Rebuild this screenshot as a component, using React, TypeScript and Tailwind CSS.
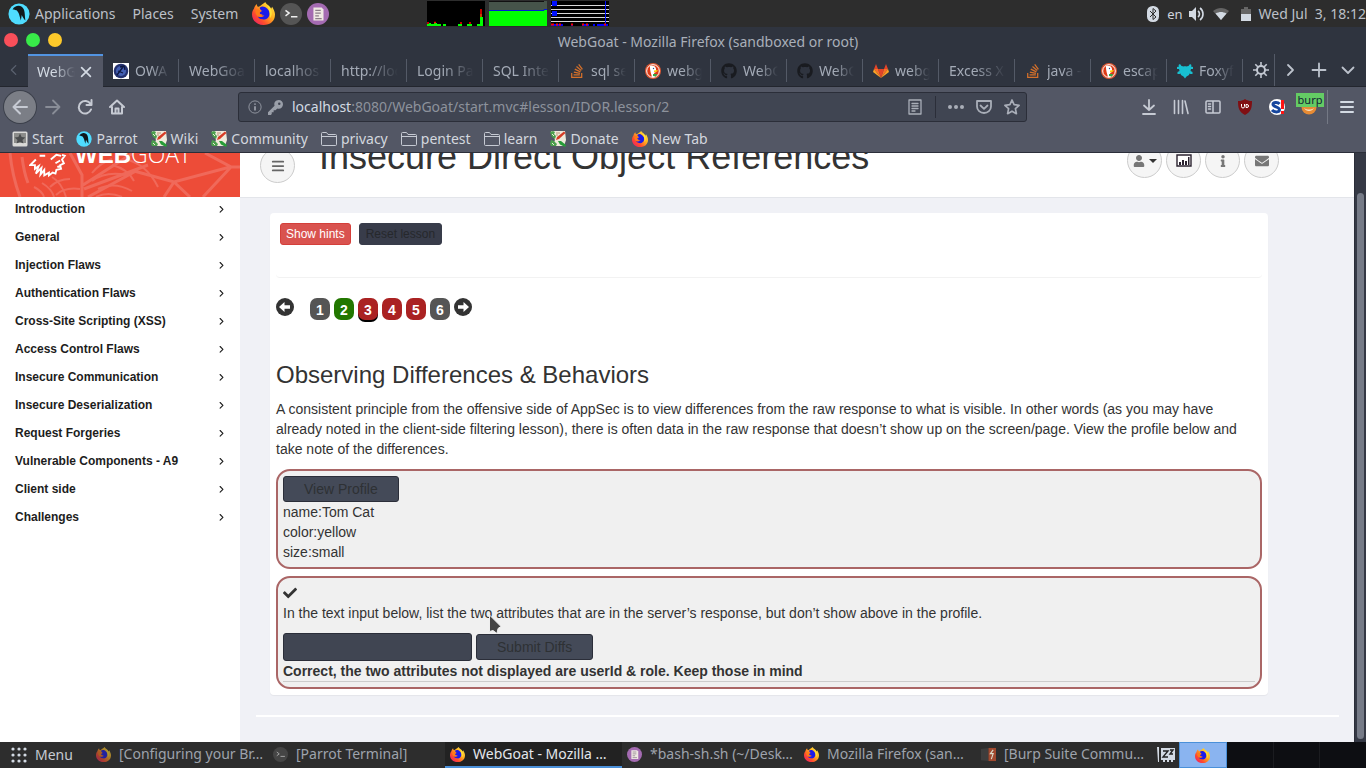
import React from "react";
import { FaGithub, FaStackOverflow, FaUser, FaInfo, FaEnvelope, FaCheck } from "react-icons/fa";

type IconProps = { className?: string };

const Firefox = ({ className = "size-4" }: IconProps) => (
  <svg viewBox="0 0 24 24" className={className} aria-hidden="true">
    <defs>
      <linearGradient id="ffx" x1="1" y1="0" x2="0" y2="1">
        <stop offset="0" stopColor="#fff44f" />
        <stop offset=".4" stopColor="#ffb01f" />
        <stop offset=".7" stopColor="#ff4a2e" />
        <stop offset="1" stopColor="#e5127d" />
      </linearGradient>
    </defs>
    <path d="M2 7C3 4 4 3 5 2c0 2 1 3 2 3 2-1 4-3 7-5 0 2 5 4 6 7l1-2c2 3 3 6 3 8 0 7-5 11-12 11S0 19 0 13c0-3 1-5 2-6z" fill="url(#ffx)" />
    <path d="M8 6c2-2 5-2 8 1 2 2 3 4 2 7-1 3-4 5-7 4-3 0-5-2-5-4 2 1 4 1 5-1-2 0-4-1-4-3 1 0 2 0 3-1-1-1-2-2-2-3z" fill="#1b1bea" />
    <path d="M4 8c2-1 4 0 5 1l2 0c-1 1-3 1-3 3 1 2 3 2 5 2-2 2-5 2-7 1-2-2-3-4-2-7z" fill="#ff7a18" />
    <path d="M16 3c5 4 6 9 3 14 0-5-1-9-3-14z" fill="#ffe339" />
  </svg>
);

const Parrot = ({ className = "size-4" }: IconProps) => (
  <svg viewBox="0 0 24 24" className={className} aria-hidden="true">
    <circle cx="12" cy="12" r="11.5" fill="#4fdcff" />
    <path d="M5 7c2-4 7-5 10-3 4 3 3 9 4 15-2-2-3-4-4-6l-1 6-2-7c-1-2-2-4-3-4-2-1-3-1-4-1z" fill="#10181c" />
  </svg>
);

const Terminal = ({ className = "size-[22px]" }: IconProps) => (
  <svg viewBox="0 0 24 24" className={className} aria-hidden="true">
    <circle cx="12" cy="12" r="12" fill="#555" />
    <path d="M6 8l4 3-4 3M12 15h7" fill="none" stroke="#eee" strokeWidth="1.6" />
  </svg>
);

const Editor = ({ className = "size-[22px]" }: IconProps) => (
  <svg viewBox="0 0 24 24" className={className} aria-hidden="true">
    <circle cx="12" cy="12" r="12" fill="#a46bb2" />
    <path d="M7 5h9l2 2v12H7z" fill="#efe9e4" />
    <path d="M9 8h6M9 11h6M9 14h4M9 17h7" stroke="#8b7d88" strokeWidth="1.2" />
  </svg>
);

const Wiki = () => (
  <svg viewBox="0 0 16 16" className="size-4" aria-hidden="true">
    <path d="M1 0h14l1 9-2 6H2l3-6z" fill="#efeadb" />
    <path d="M0 1l3-1 2 1-1 2 2 2-1 3-3-2zM1 9l3 1 3 3-1 2H1l-1-2z" fill="#4b9f4d" />
    <path d="M2 3l2 2M2 12l2 2" stroke="#efeadb" />
    <path d="M6 9l1-3 7-5.500 1.500 1.500L9 8z" fill="#d63c26" />
    <path d="M8 10l3 0 5 4-1 2-5-2.500z" fill="#279c38" />
    <path d="M6 2h4M6 4h2" stroke="#b98a6c" strokeWidth=".9" />
  </svg>
);

const Folder = () => (
  <svg viewBox="0 0 16 16" className="size-4" fill="none" stroke="#c6cad3" aria-hidden="true">
    <path d="M.5 13.500v-11c0-.6.4-1 1-1h4l1.500 2h7.500c.6 0 1 .4 1 1v9c0 .6-.4 1-1 1h-13c-.6 0-1-.4-1-1zM.5 5.500h15" />
  </svg>
);

const StartIcon = () => (
  <svg viewBox="0 0 16 16" className="size-4" aria-hidden="true">
    <rect x=".5" y=".5" width="15" height="15" rx="1.500" fill="#d9d9d7" />
    <rect x="2" y="2" width="12" height="10" fill="#8b8c8a" />
    <path d="M8 2.500l1.600 3.500 3.800.4-2.900 2.500.9 3.700L8 10.700l-3.400 1.900.9-3.700L2.600 6.400l3.800-.4z" fill="#4a4c4e" />
  </svg>
);

const Duck = () => (
  <svg viewBox="0 0 16 16" className="size-4 shrink-0" aria-hidden="true">
    <circle cx="8" cy="8" r="8" fill="#de5833" />
    <circle cx="8" cy="8" r="6.300" fill="#de3a16" stroke="#fff" />
    <path d="M5 3c3-1 6 0 6 3v3l-2 1 1 4-3 0C6 11 5 7 5 5z" fill="#fff" />
    <path d="M9 7.500c2 0 3-.5 4 0-.5 1-2 2-4 1.500z" fill="#fdd20a" />
    <path d="M8 11l4 0-1 2.500-3-.5z" fill="#35a844" />
    <circle cx="8.500" cy="5.500" r=".7" fill="#2d4f8e" />
  </svg>
);

const Owasp = () => (
  <svg viewBox="0 0 16 16" className="size-4 shrink-0" aria-hidden="true">
    <path d="M0 0h16v16H0z" fill="#fff" />
    <circle cx="8" cy="8" r="7.300" fill="#23316f" />
    <circle cx="8" cy="8" r="5" fill="#4460b4" />
    <path d="M4 12l6-8M7 4l4-1 1 4M5 8l5 2" stroke="#0d1740" strokeWidth="1.300" fill="none" />
  </svg>
);

const Foxy = () => (
  <svg viewBox="0 0 16 16" className="size-4 shrink-0" fill="#18bfd1" aria-hidden="true">
    <path d="M3 1l1.500 2L7 3.500 8 3l1 .5 2.500-.5L13 1l1.500 1-.5 1.500 2 .5v2l-2 0-.5 2 2 1v2h-2l-1-.5-.5 1.500-2.500 1.500L8 15.500 6.500 13.500 4 12l-.5-1.500-1 .5h-2V9l2-1L2 6H0V4l2-.5L1.500 2z" />
  </svg>
);

const Gitlab = () => (
  <svg viewBox="0 0 16 16" className="size-4 shrink-0" aria-hidden="true">
    <path d="M8 15L5 6h6z" fill="#e24329" />
    <path d="M8 15L5 6H1zM8 15l3-9h4z" fill="#fc6d26" />
    <path d="M8 15L1 6 0 9zM8 15l7-9 1 3z" fill="#fca326" />
    <path d="M1 6l2-5 2 5zM11 6l2-5 2 5z" fill="#e24329" />
  </svg>
);

const CircleArrow = ({ flip = false }: { flip?: boolean }) => (
  <svg viewBox="0 0 18 18" className={flip ? "size-[18px] -scale-x-100" : "size-[18px]"} aria-hidden="true">
    <circle cx="9" cy="9" r="9" fill="#333" />
    <path d="M3 9l5.500-5v3.300H14v3.400H8.500V14z" fill="#fff" />
  </svg>
);

const Gear = () => (
  <svg viewBox="0 0 16 16" className="size-4" fill="none" stroke="#c3c8d2" strokeWidth="2" aria-hidden="true">
    <circle cx="8" cy="8" r="4" />
    <path d="M8 0v4M8 12v4M0 8h4M12 8h4M2.300 2.300l2.700 2.700M11 11l2.700 2.700M2.300 13.700L5 11M11 5l2.700-2.700" strokeWidth="1.600" />
  </svg>
);

const Stroke = ({ d, className = "size-4", w = 2 }: { d: string; className?: string; w?: number }) => (
  <svg viewBox="0 0 16 16" className={className} fill="none" stroke="currentColor" strokeWidth={w} strokeLinecap="round" strokeLinejoin="round" aria-hidden="true">
    <path d={d} />
  </svg>
);

const stack = <FaStackOverflow className="size-4 shrink-0 text-[#d5702a]" />;
const hub = <FaGithub className="size-4 shrink-0 text-[#191b20]" />;

const tabs: { label: string; icon?: React.ReactNode }[] = [
  { label: "OWA", icon: <Owasp /> },
  { label: "WebGoa" },
  { label: "localhos" },
  { label: "http://loc" },
  { label: "Login Pa" },
  { label: "SQL Inte" },
  { label: "sql se", icon: stack },
  { label: "webg", icon: <Duck /> },
  { label: "WebG", icon: hub },
  { label: "WebG", icon: hub },
  { label: "webg", icon: <Gitlab /> },
  { label: "Excess X" },
  { label: "java -", icon: stack },
  { label: "escap", icon: <Duck /> },
  { label: "Foxyf", icon: <Foxy /> },
];

const fade = "min-w-0 flex-1 overflow-hidden whitespace-nowrap [mask-image:linear-gradient(to_right,#000_45%,transparent)]";

const bookmarks: { label: string; icon: React.ReactNode }[] = [
  { label: "Start", icon: <StartIcon /> },
  { label: "Parrot", icon: <Parrot /> },
  { label: "Wiki", icon: <Wiki /> },
  { label: "Community", icon: <Wiki /> },
  { label: "privacy", icon: <Folder /> },
  { label: "pentest", icon: <Folder /> },
  { label: "learn", icon: <Folder /> },
  { label: "Donate", icon: <Wiki /> },
  { label: "New Tab", icon: <Firefox /> },
];

const lessons = [
  "Introduction", "General", "Injection Flaws", "Authentication Flaws", "Cross-Site Scripting (XSS)", "Access Control Flaws",
  "Insecure Communication", "Insecure Deserialization", "Request Forgeries", "Vulnerable Components - A9", "Client side", "Challenges",
];

const pages = [
  { n: 1, c: "bg-[#555555]" },
  { n: 2, c: "bg-[#227700]" },
  { n: 3, c: "bg-[#aa2222] shadow-[0_2px_0_#000]" },
  { n: 4, c: "bg-[#aa2222]" },
  { n: 5, c: "bg-[#aa2222]" },
  { n: 6, c: "bg-[#555555]" },
];

function DesktopPanel() {
  return (
    <header className="flex h-[27px] shrink-0 items-center bg-[#2d2d2d] pl-2 text-[#bcc0c8]">
      <Parrot className="size-[22px]" />
      <nav className="ml-[5px] flex gap-[17px]">
        <button>Applications</button>
        <button>Places</button>
        <button>System</button>
      </nav>
      <div className="ml-[14px] flex gap-[5px]">
        <button aria-label="Firefox"><Firefox className="size-[23px]" /></button>
        <button aria-label="Terminal"><Terminal /></button>
        <button aria-label="Editor"><Editor /></button>
      </div>
      <div className="ml-[98px] flex gap-1 self-start pt-px">
        <svg width="58" height="25" aria-label="Processor">
          <path d="M0 0h58v25H0z" fill="#000" />
          <path d="M0 24h14M16 24h3M31 24h4M40 24h5M50 24h6M2 23h2M7 23h3" stroke="#0f0" strokeWidth="2" />
          <path d="M54 25V13M55 25V16" stroke="#0f0" strokeWidth="2" />
          <path d="M54 16V8M0 22h2M7 21.500h2M33 22h2M42 22h2" stroke="#f00" strokeWidth="1.500" />
        </svg>
        <svg width="58" height="25" aria-label="Memory">
          <path d="M0 0h58v25H0z" fill="#46544a" />
          <path d="M0 9h56v-1h2v17H0z" fill="#0f0" />
          <path d="M0 9.500h55V8.500h3" stroke="#0018d8" fill="none" />
          <path d="M0 .5h55" stroke="#111" />
        </svg>
        <svg width="58" height="25" aria-label="Network">
          <path d="M0 0h58v25H0z" fill="#000" />
          <path d="M0 4.500h58M0 8.500h58M0 12.500h58M0 16.500h58M0 20.500h58" stroke="#d8d8d8" />
          <path d="M1 0h5v5H1zM1 10h5v5H1zM54 0h1v24h-1z" fill="#0010ff" />
          <path d="M0 24h12M20 24h2M31 24h7M42 24h2M46 24h11" stroke="#00f" strokeWidth="2" />
          <path d="M0 23.500h3M5 23.500h2M8 23.500h2M20 23.500h2M31 23.500h2M35 23.500h2M53 23.500h2" stroke="#f00" strokeWidth="2" />
        </svg>
      </div>
      <div className="ml-auto flex items-center text-[#cfd3dc]">
        <svg viewBox="0 0 12 16" className="h-4 w-3" aria-hidden="true">
          <rect width="12" height="16" rx="5.500" fill="#d3dae3" />
          <path d="M3 5l6 6-3 2.500v-11L9 5l-6 6" fill="none" stroke="#2d2d2d" />
        </svg>
        <span className="ml-2 text-[13px]">en</span>
        <svg viewBox="0 0 16 16" className="ml-[6px] size-4" aria-hidden="true">
          <path d="M0 5h3l4-4v14l-4-4H0z" fill="#d3dae3" />
          <path d="M9 5c2 1.500 2 4.500 0 6M11 2c4 3 4 9 0 12" stroke="#d3dae3" strokeWidth="1.600" fill="none" />
        </svg>
        <svg viewBox="0 0 16 16" className="ml-2 size-4" aria-hidden="true">
          <path d="M8 14L0 5c5-4 11-4 16 0z" fill="#646464" />
          <path d="M8 14L2.500 7.500c4-2 7-2 11 0z" fill="#d3dae3" />
        </svg>
        <svg viewBox="0 0 10 14" className="ml-3 h-[14px] w-[10px]" aria-hidden="true">
          <path d="M0 2h3V0h4v2h3v12H0z" fill="#666" />
          <path d="M0 7h10v7H0z" fill="#d3dae3" />
        </svg>
        <time className="ml-2 text-[#bcc0c8]">Wed Jul&nbsp; 3, 18:12</time>
      </div>
    </header>
  );
}

function BrowserChrome() {
  return (
    <>
      <div className="flex h-[27px] shrink-0 items-center bg-[#2f343f] pl-1">
        <div className="flex flex-none gap-2 pb-px">
          <button aria-label="Close" className="size-[14px] rounded-full bg-[#f94f5a]" />
          <button aria-label="Maximize" className="size-[14px] rounded-full bg-[#38ea49]" />
          <button aria-label="Minimize" className="size-[14px] rounded-full bg-[#fdc92b]" />
        </div>
        <h1 className="flex-1 pt-[3px] pr-3 text-center text-[#a9afb9]">WebGoat - Mozilla Firefox (sandboxed or root)</h1>
      </div>
      <div className="flex h-[33px] shrink-0 items-stretch border-b border-[#23262e] bg-[#2f343f] text-[#a4abb7]">
        <button aria-label="Scroll tabs left" className="flex w-7 items-center justify-center text-[#5b6270]"><Stroke d="M10 3L5 8l5 5" className="size-[14px]" w={1.500} /></button>
        <button className="-mb-px flex w-[75px] items-center border-t-2 border-[#5294e2] bg-[#535765] pr-[10px] pl-[9px] text-[#d3dae3]">
          <span className={fade}>WebG</span>
          <Stroke d="M3 3l10 10M13 3L3 13" className="ml-1 size-[14px]" w={2} />
        </button>
        {tabs.map((t, i) => (
          <button key={i} className="flex w-[76px] items-center pt-[5px] pb-1">
            <span className="flex h-full min-w-0 flex-1 items-center gap-[6px] border-r border-[#545a67] pr-2 pl-[10px] text-left">
              {t.icon}
              <span className={fade}>{t.label}</span>
            </span>
          </button>
        ))}
        <button aria-label="Settings tab" className="flex flex-1 items-center border-r border-[#545a67] pl-[10px]"><Gear /></button>
        <div className="flex w-[91px] shrink-0 items-center justify-around pr-[3px] text-[#bcc2cc]">
          <button aria-label="Scroll tabs right"><Stroke d="M6 3l5 5-5 5" w={1.800} /></button>
          <button aria-label="New tab"><Stroke d="M8 1.500v13M1.500 8h13" w={1.800} /></button>
          <button aria-label="List all tabs"><Stroke d="M2.500 5.500L8 11l5.500-5.500" w={1.800} /></button>
        </div>
      </div>
      <div className="flex h-10 shrink-0 items-center bg-[#535765] pr-[11px] pl-1 text-[#c6cad3]">
        <button aria-label="Back" className="flex size-8 items-center justify-center rounded-full bg-[#7b7e86] ring-1 ring-[#3c404b]"><Stroke d="M15 8H1.500M8 1.500L1.500 8 8 14.500" /></button>
        <button aria-label="Forward" className="ml-[9px] text-[#898d97]"><Stroke d="M1 8h13.500M8 1.500L14.500 8 8 14.500" w={1.800} /></button>
        <button aria-label="Reload" className="ml-4"><Stroke d="M14 10.500A6.300 6.300 0 1 1 13.500 5M14.500 1v5h-5" /></button>
        <button aria-label="Home" className="ml-4">
          <Stroke d="M1 8l7-6.500L15 8M3 8v6.500h10V8M6.500 14V9.500h3V14" />
        </button>
        <div className="ml-[113px] flex h-[30px] w-[789px] shrink-0 items-center rounded-[3px] border border-[#2b2e39] bg-[#404552] px-[6px]">
          <svg viewBox="0 0 16 16" className="ml-[3px] size-[14px]" fill="none" stroke="#9a9fa9" aria-hidden="true"><circle cx="8" cy="8" r="7" /><path d="M8 7v5M8 4v1.500" strokeWidth="2" /></svg>
          <svg viewBox="0 0 16 16" className="ml-[6px] size-[15px]" fill="#9a9fa9" aria-hidden="true"><path d="M7 6c-1-3 1-6 4.500-6C14 0 16 2 16 4.500 16 8 13 10 10 9L8 11H6v2H4v2l-1 1H0v-3z" /><circle cx="12" cy="4" r="1.300" fill="#404552" /></svg>
          <div className="ml-[9px] flex-1 text-[#8d929c]"><span className="text-[#d3dae3]">localhost</span>:8080/WebGoat/start.mvc#lesson/IDOR.lesson/2</div>
          <div className="flex items-center text-[#a9aeb8]">
            <button aria-label="Reader view"><Stroke d="M2 1h12v14H2zM5 4.500h6M5 7h6M5 9.500h6M5 12h3" w={1.300} /></button>
            <span className="mx-3 h-[22px] w-px bg-[#2b2e39]" />
            <button aria-label="Page actions"><svg viewBox="0 0 16 16" className="size-4" fill="currentColor" aria-hidden="true"><circle cx="2" cy="8" r="2" /><circle cx="8" cy="8" r="2" /><circle cx="14" cy="8" r="2" /></svg></button>
            <button aria-label="Save to Pocket" className="ml-3"><Stroke d="M1 2h14v5.500a7 6.500 0 0 1-14 0zM4.500 6.500L8 9.800l3.500-3.300" w={1.800} /></button>
            <button aria-label="Bookmark" className="ml-3"><Stroke d="M8 1l2.100 4.700 5 .6-3.700 3.400 1 5L8 12.200l-4.400 2.500 1-5L.9 6.300l5-.6z" w={1.700} /></button>
          </div>
        </div>
        <div className="ml-auto flex items-center gap-4">
          <button aria-label="Downloads"><Stroke d="M8 1v10M3 6.500L8 11l5-4.500M2 15h12" w={1.800} /></button>
          <button aria-label="Library"><Stroke d="M1.500 1.500v13M5.500 1.500v13M9.500 1.500v13M12 2l3 12.500" w={1.600} /></button>
          <button aria-label="Sidebars"><Stroke d="M2 2h12a1 1 0 0 1 1 1v10a1 1 0 0 1-1 1H2a1 1 0 0 1-1-1V3a1 1 0 0 1 1-1zM8 2v12M3.500 5h2M3.500 7.500h2M3.500 10h2" w={1.500} /></button>
          <button aria-label="uBlock">
            <svg viewBox="0 0 16 16" className="size-4" aria-hidden="true"><path d="M8 0c2 1.500 4 2 7 2 0 7-1 11-7 14C2 13 1 9 1 2c3 0 5-.5 7-2z" fill="#800f13" /><path d="M4.500 5v2.500a1.500 1.500 0 0 0 3 0V5M9 5.500v3h1a1.500 1.500 0 0 0 0-3z" fill="none" stroke="#fff" /></svg>
          </button>
          <button aria-label="NoScript">
            <svg viewBox="0 0 16 16" className="size-4" aria-hidden="true">
              <circle cx="8" cy="8" r="8" fill="#fff" />
              <path d="M10.500 5C9 3 4 3 4 5.500S10.500 8 10.500 10.800 5 13.500 3 11" fill="none" stroke="#17479e" strokeWidth="3" />
              <path d="M12 1h3v9h-3zM12 12h3v3h-3z" fill="#ff1414" />
            </svg>
          </button>
          <button aria-label="FoxyProxy" className="relative">
            <svg viewBox="0 0 16 16" className="size-4" aria-hidden="true"><circle cx="8" cy="8" r="7.500" fill="#e78b34" /><path d="M3 9c2 4 8 4 10 0-3 2-7 2-10 0z" fill="#f7e3c6" /></svg>
            <span className="absolute -top-[6px] -left-[5px] h-[14px] w-7 bg-[#64cc64] text-center text-[11px] leading-[13px] text-[#112233]">burp</span>
          </button>
          <button aria-label="Menu" className="-ml-[6px] flex h-[34px] items-center border-l border-[#747985] pl-[11px] text-[#d3dae3]"><Stroke d="M2 3h12M2 8h12M2 13h12" /></button>
        </div>
      </div>
      <div className="flex h-[26px] shrink-0 items-center gap-[13px] border-b border-[#2b2e39] bg-[#535765] px-3 pb-[2px] text-[#d3d7df]">
        {bookmarks.map((b) => (
          <a key={b.label} href="#" className="flex items-center gap-1 whitespace-nowrap">{b.icon}{b.label}</a>
        ))}
      </div>
    </>
  );
}

function Sidebar() {
  return (
    <aside className="flex w-60 shrink-0 flex-col bg-white">
      <div className="relative flex h-11 shrink-0 items-end overflow-hidden bg-[#ed4c38] text-white">
        <svg viewBox="0 0 240 44" className="absolute inset-0 h-full w-full" fill="none" stroke="#f0695a" strokeWidth="3" aria-hidden="true">
          <path d="M10 0q2 22 10 44M22 4q2 16 6 26M82 44V22L70 0M83 32l50-32M84 36L148 12M88 44l48-26M134 18l40 11 56-15h10M174 29l16 15M174 29l-10 15M205 0l26 14-28 30" />
          <path d="M34 34q8 4 10 10M42 30q10 6 12 14M52 24q10 6 14 20M92 20q8-10 20-14M92 28q14-10 34-6M98 36q16-8 34 2M96 44q12-6 26 0M112 12q16 4 22 16M124 6q22 4 34 28M50 34q8-8 20-8M56 42q8-8 24-6" strokeWidth="2" />
        </svg>
        <svg viewBox="0 0 40 30" className="relative mb-4 ml-[29px] h-7 w-[38px]" fill="none" stroke="#fff" strokeWidth="2" aria-hidden="true">
          <path d="M7 7L1 13l5 0 0 4 4-3-3 8 6-6-1 7 4-5 0 6 5-3 0 3 4-3 3 1 1-4 5-1-1-4 4-2-2-4 3-4-3-1M11 3h6M23 7l6-5 5 1M28 11l5-3M30 15l3-1" />
        </svg>
        <div className="relative mb-[26px] ml-2 text-[24px] leading-8 whitespace-nowrap"><b>WEB</b><span className="font-['Open_Sans','Liberation_Sans',sans-serif] text-[23px] font-light">GOAT</span></div>
      </div>
      <nav className="flex flex-col text-[12px] leading-7 font-bold text-[#1d1d1d]" aria-label="Lessons">
        {lessons.map((l) => (
          <a key={l} href="#" className="-mt-[2px] mb-[2px] flex items-center justify-between pr-[13px] pl-[15px]">
            {l}
            <Stroke d="M5 4l4.500 4.500L5 13" className="size-[10px]" w={1.800} />
          </a>
        ))}
      </nav>
    </aside>
  );
}

const circle = "flex size-[35px] items-center justify-center rounded-full border border-[#ccc] bg-[#f5f5f5]";
const darkButton = "h-[26px] rounded-[3px] border border-[#2b2e39] bg-[#444a58] px-5 text-[#2e3134]";
const box = "relative rounded-[14px] border-2 border-[#aa6666] bg-[#f0f0f0] p-[5px]";

function Lesson() {
  return (
    <main className="flex min-w-0 flex-1 flex-col overflow-hidden bg-[#f0f1f6]">
      <div className="flex h-[45px] shrink-0 items-end border-b border-[#e3e5ea] bg-white pr-[75px] pl-5">
        <button aria-label="Toggle menu" className={`${circle} mb-[14px] text-[#666]`}><Stroke d="M2 3h12M2 8h12M2 13h12" className="size-[14px]" w={2} /></button>
        <h1 className="mb-5 ml-6 flex-1 text-[36px] leading-10 whitespace-nowrap text-[#333]">Insecure Direct Object References</h1>
        <div className="mb-[19px] flex gap-1 text-[#777]">
          <button aria-label="User" className={circle}><FaUser className="size-3" /><span className="ml-1 border-x-4 border-t-4 border-x-transparent border-t-[#333]" /></button>
          <button aria-label="Report card" className={`${circle} text-[#333]`}>
            <svg viewBox="0 0 16 14" className="h-[14px] w-4" aria-hidden="true"><path d="M1 1h14v11H1z" fill="#fff" stroke="#2b2330" strokeWidth="1.400" /><path d="M3 8h2v3H3zM6 6h2v5H6zM9 7h2v4H9zM12 3h1.500v8H12z" fill="#2b2330" /></svg>
          </button>
          <button aria-label="About" className={circle}><FaInfo className="size-3" /></button>
          <button aria-label="Contact" className={circle}><FaEnvelope className="size-[14px]" /></button>
        </div>
      </div>
      <section className="mt-[15px] mr-[86px] ml-[30px] rounded-[4px] bg-white px-[6px] pb-[6px] text-[14px] leading-5 text-[#333] shadow-[0_1px_1px_rgba(0,0,0,0.05)]">
        <div className="flex h-[65px] items-start gap-2 rounded-b border-b border-[#f2f2f2] pt-[10px] pl-1 text-[12px] leading-5">
          <button className="rounded-[3px] border border-[#d43f3a] bg-[#d9534f] px-[5px] text-white">Show hints</button>
          <button className="rounded-[3px] border border-[#383c4a] bg-[#383c4a] px-[6px] text-[#26282c]">Reset lesson</button>
        </div>
        <nav className="mt-5 flex gap-1 text-[#333]" aria-label="Lesson pages">
          <a href="#" aria-label="Previous page" className="mr-3"><CircleArrow /></a>
          {pages.map((p) => (
            <a key={p.n} href="#" className={`h-[22px] w-5 rounded-[7px] pt-[2px] text-center font-bold text-white ${p.c}`}>{p.n}</a>
          ))}
          <a href="#" aria-label="Next page"><CircleArrow flip /></a>
        </nav>
        <h2 className="mt-[42px] text-[24px] leading-[26px]">Observing Differences &amp; Behaviors</h2>
        <p className="mt-[11px]">A consistent principle from the offensive side of AppSec is to view differences from the raw response to what is visible. In other words (as you may have already noted in the client-side filtering lesson), there is often data in the raw response that doesn’t show up on the screen/page. View the profile below and take note of the differences.</p>
        <div className={`${box} mt-[10px]`}>
          <button className={`${darkButton} block`}>View Profile</button>
          <div>name:Tom Cat</div>
          <div>color:yellow</div>
          <div>size:small</div>
        </div>
        <form className={`${box} mt-[7px]`} onSubmit={(e) => e.preventDefault()}>
          <div className="flex h-5 items-center"><FaCheck className="size-[14px]" /></div>
          <label htmlFor="diffs" className="block">In the text input below, list the two attributes that are in the server’s response, but don’t show above in the profile.</label>
          <div className="mt-[10px] flex items-center gap-1">
            <input id="diffs" type="text" className="h-7 w-[189px] rounded-[3px] border border-[#2b2e39] bg-[#404552] px-2" />
            <button className={darkButton}>Submit Diffs</button>
          </div>
          <div className="border-b border-[#ccc] font-bold">Correct, the two attributes not displayed are userId &amp; role. Keep those in mind</div>
          <svg viewBox="0 0 12 20" className="absolute top-9 left-[211px] h-5 w-3" aria-hidden="true">
            <path d="M.5 1v16.500l3.500-1 4 3 1-5 3-2z" fill="#454545" stroke="#eee" />
          </svg>
        </form>
      </section>
      <hr className="mt-5 mr-[15px] ml-4 border-t-2 border-white" />
    </main>
  );
}

const tasks: { label: string; icon: React.ReactNode; active?: boolean }[] = [
  { label: "[Configuring your Br…", icon: <Firefox className="size-[15px] opacity-60" /> },
  { label: "[Parrot Terminal]", icon: <Terminal className="size-[15px] opacity-60" /> },
  { label: "WebGoat - Mozilla …", icon: <Firefox className="size-[15px]" />, active: true },
  { label: "*bash-sh.sh (~/Desk…", icon: <Editor className="size-[15px]" /> },
  { label: "Mozilla Firefox (san…", icon: <Firefox className="size-[15px]" /> },
  { label: "[Burp Suite Commu…", icon: <svg viewBox="0 0 16 16" className="size-[15px]" aria-hidden="true"><path d="M0 2l8-1v14l-8-1z" fill="#3d3d3d" /><path d="M8 1h8v14H8z" fill="#a0492f" /><path d="M13 3l-3 4h3l-2 6" stroke="#ddc" fill="none" strokeWidth="1.200" /></svg> },
];

function Taskbar() {
  return (
    <footer className="flex h-[26px] shrink-0 items-stretch bg-[#2d2d2d] text-[#9ea3ac]">
      <button className="flex w-[91px] items-center gap-2 pl-[11px] text-[#c6cad2]">
        <svg viewBox="0 0 16 16" className="size-4" fill="#d3dae3" aria-hidden="true">
          {[2, 8, 14].map((y) => [2, 8, 14].map((x) => <circle key={`${x}-${y}`} cx={x} cy={y} r="1.600" />))}
        </svg>
        Menu
      </button>
      {tasks.map((t) => (
        <button key={t.label} className={`flex min-w-0 flex-1 items-center gap-2 border-b-2 pl-[5px] whitespace-nowrap ${t.active ? "border-[#4a90d9] bg-[#222] text-[#e4e7ec]" : "border-transparent"}`}>{t.icon}{t.label}</button>
      ))}
      <div className="flex w-[26px] items-center justify-center">
        <svg viewBox="0 0 18 16" className="h-4 w-[18px]" aria-hidden="true">
          <path d="M0 0h2v15H1M4 1h14v12h-2v2h-2v-2h-2v2h-2v-2H8v2H6v-2H4z" fill="#d3dae3" />
          <path d="M6 4h5l-5 6h5M13 3h3l-3 4h3" stroke="#222" strokeWidth="1.400" fill="none" />
        </svg>
      </div>
      <div className="flex w-[187px] bg-[#0d0e12]">
        <button aria-label="Workspace 1" className="flex flex-1 items-center justify-center border border-[#4a90d9] bg-[#8ab4f0]"><Firefox className="size-[15px]" /></button>
        <button aria-label="Workspace 2" className="flex-1 border-r border-[#1b1c20]" />
        <button aria-label="Workspace 3" className="flex-1 border-r border-[#1b1c20]" />
        <button aria-label="Workspace 4" className="flex-1" />
      </div>
    </footer>
  );
}

export default function App() {
  return (
    <div className="flex h-screen flex-col overflow-hidden font-['Noto_Sans',sans-serif] text-[14px] leading-5">
      <DesktopPanel />
      <BrowserChrome />
      <div className="flex min-h-0 flex-1 font-['Liberation_Sans',Arial,sans-serif]">
        <Sidebar />
        <Lesson />
        <div className="flex w-3 shrink-0 flex-col border-l border-[#2b2e39] bg-[#353945] px-[2px] pt-10 pb-[3px]">
          <div className="flex-1 rounded-full bg-[#767b87]" />
        </div>
      </div>
      <Taskbar />
    </div>
  );
}
